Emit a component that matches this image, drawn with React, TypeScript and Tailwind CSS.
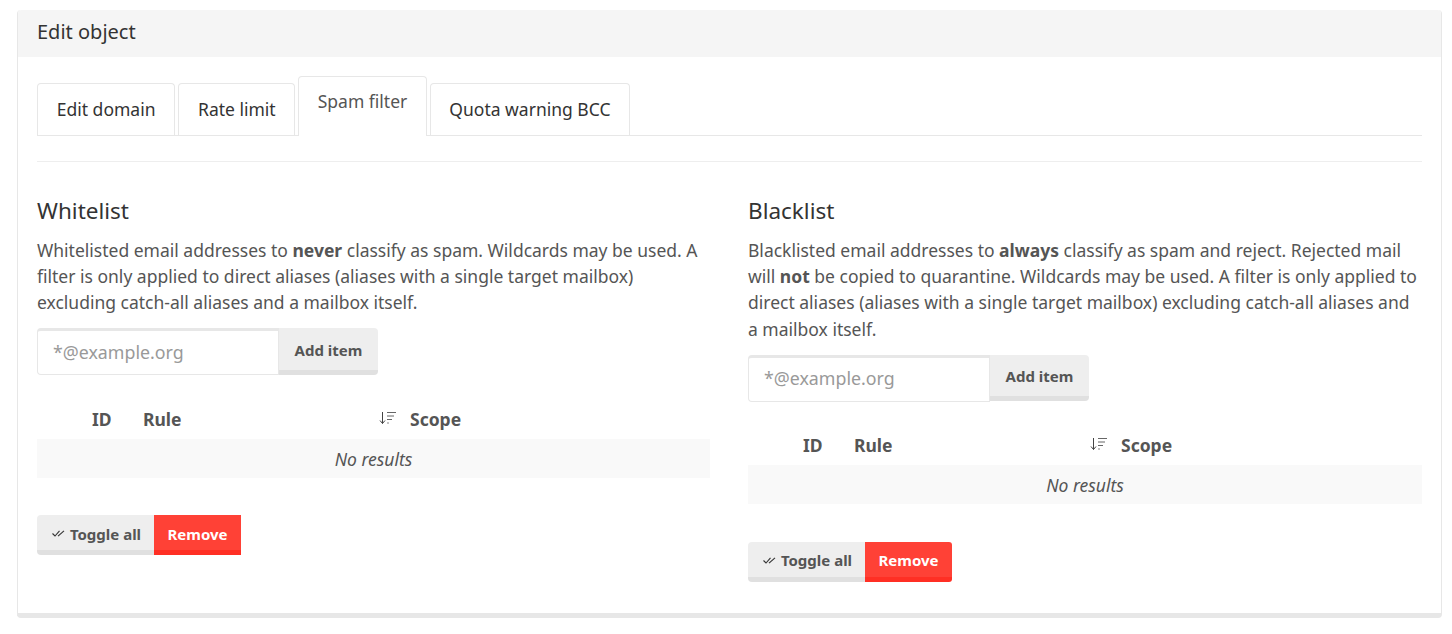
const Tab = ({ label, active }: { label: string; active?: boolean }) => (
  <div
    className={
      active
        ? "mr-[3px] h-[60px] -mt-[7px] -mb-px rounded-t-[4px] border border-b-0 border-[#e7e7e7] bg-white px-[18.3px] pt-[11px] text-[#555555]"
        : "mr-[3px] h-[52px] rounded-t-[4px] border border-b-0 border-[#e7e7e7] bg-white px-[18.75px] pt-[12px] text-[#333333]"
    }
  >
    {label}
  </div>
);

const SortIcon = () => (
  <svg width="18" height="14" viewBox="0 0 18 14" fill="none" stroke="#444444" strokeWidth="1">
    <path d="M3.5 1v11.5M1 9.5l2.5 3 2.5-3" />
    <path d="M8 1.5h9M8 5h7M8 8.5h5" stroke="#666666" />
    <path d="M8 12h2" stroke="#888888" />
  </svg>
);

const CheckIcon = () => (
  <svg width="13" height="7" viewBox="0 0 13 7" fill="none" stroke="#333333" strokeWidth="1.1">
    <path d="M0.5 3.5l2.5 2.5L7.5 0.8" />
    <path d="M6 6.2L12 0.8" />
  </svg>
);

const FilterList = ({
  title,
  roundRemove,
  children,
}: {
  title: string;
  roundRemove?: boolean;
  children: React.ReactNode;
}) => (
  <div>
    <h3 className="mt-[34px] text-[22.5px] leading-[30px] text-[#333333]">{title}</h3>
    <p className="mt-[10.9px] leading-[26.2px] text-[#555555]">{children}</p>
    <div className="mt-[12.9px] flex h-[47px] w-[341px] items-start">
      <div className="flex h-[47px] w-[242px] items-center rounded-l-[4px] border border-t-[3px] border-[#e7e7e7] bg-white pb-[2px] pl-[15px] text-[17.8px] text-[#999999]">
        *@example.org
      </div>
      <div className="flex h-[46.6px] w-[99px] items-center justify-center rounded-r-[4px] border-b-[5px] border-[#e0e0e0] bg-[#eeeeee] pt-[2px] text-[15px] font-bold text-[#555555]">
        Add item
      </div>
    </div>
    <div className="mt-[25px] flex h-[38.6px] items-center pb-[2px] font-bold text-[#555555]">
      <span className="ml-[55px] w-[51px]">ID</span>
      <span className="w-[236px]">Rule</span>
      <span className="mr-[13px] -mt-[2px]">
        <SortIcon />
      </span>
      <span>Scope</span>
    </div>
    <div className="flex h-[39px] items-center justify-center bg-[#f9f9f9] pt-px text-[#555555] italic">
      No results
    </div>
    <div className="mt-[37.4px] flex h-[40px] text-[15px] font-bold">
      <div className="flex w-[117px] items-center justify-center gap-[5px] rounded-l-[4px] border-b-[5px] border-[#e0e0e0] bg-[#eeeeee] pt-[2px] pl-[2px] text-[#555555]">
        <CheckIcon />
        Toggle all
      </div>
      <div
        className={
          roundRemove
            ? "flex w-[87px] items-center justify-center rounded-r-[3px] border-b-[5px] border-[#ff2f24] bg-[#ff4136] pt-[2px] text-white"
            : "flex w-[87px] items-center justify-center border-b-[5px] border-[#ff2f24] bg-[#ff4136] pt-[2px] text-white"
        }
      >
        Remove
      </div>
    </div>
  </div>
);

const App = () => (
  <div className="min-h-[634px] bg-white pt-[10px] pr-[10px] pl-[17px] font-['Noto_Sans',sans-serif] text-[17.5px] leading-[26px]">
    <div className="h-[608px] rounded-[4px] border-x border-b-[5px] border-[#e7e7e7] bg-white">
      <div className="flex h-[47px] items-center rounded-t-[4px] bg-[#f5f5f5] px-[19px] pb-[3px] text-[20px] text-[#333333]">
        Edit object
      </div>
      <div className="px-[19px]">
        <div className="mt-[26px] flex h-[53px] items-start border-b border-[#e7e7e7]">
          <Tab label="Edit domain" />
          <Tab label="Rate limit" />
          <Tab label="Spam filter" active />
          <Tab label="Quota warning BCC" />
        </div>
        <div className="mt-[25px] border-t border-[#eeeeee]" />
        <div className="grid grid-cols-[673px_674px] justify-between">
          <FilterList title="Whitelist">
            Whitelisted email addresses to <b>never</b> classify as spam. Wildcards may be used. A
            filter is only applied to direct aliases (aliases with a single target mailbox)
            excluding catch-all aliases and a mailbox itself.
          </FilterList>
          <FilterList title="Blacklist" roundRemove>
            Blacklisted email addresses to <b>always</b> classify as spam and reject. Rejected mail
            will <b>not</b> be copied to quarantine. Wildcards may be used. A filter is only applied
            to direct aliases (aliases with a single target mailbox) excluding catch-all aliases and
            a mailbox itself.
          </FilterList>
        </div>
      </div>
    </div>
  </div>
);

export default App;
